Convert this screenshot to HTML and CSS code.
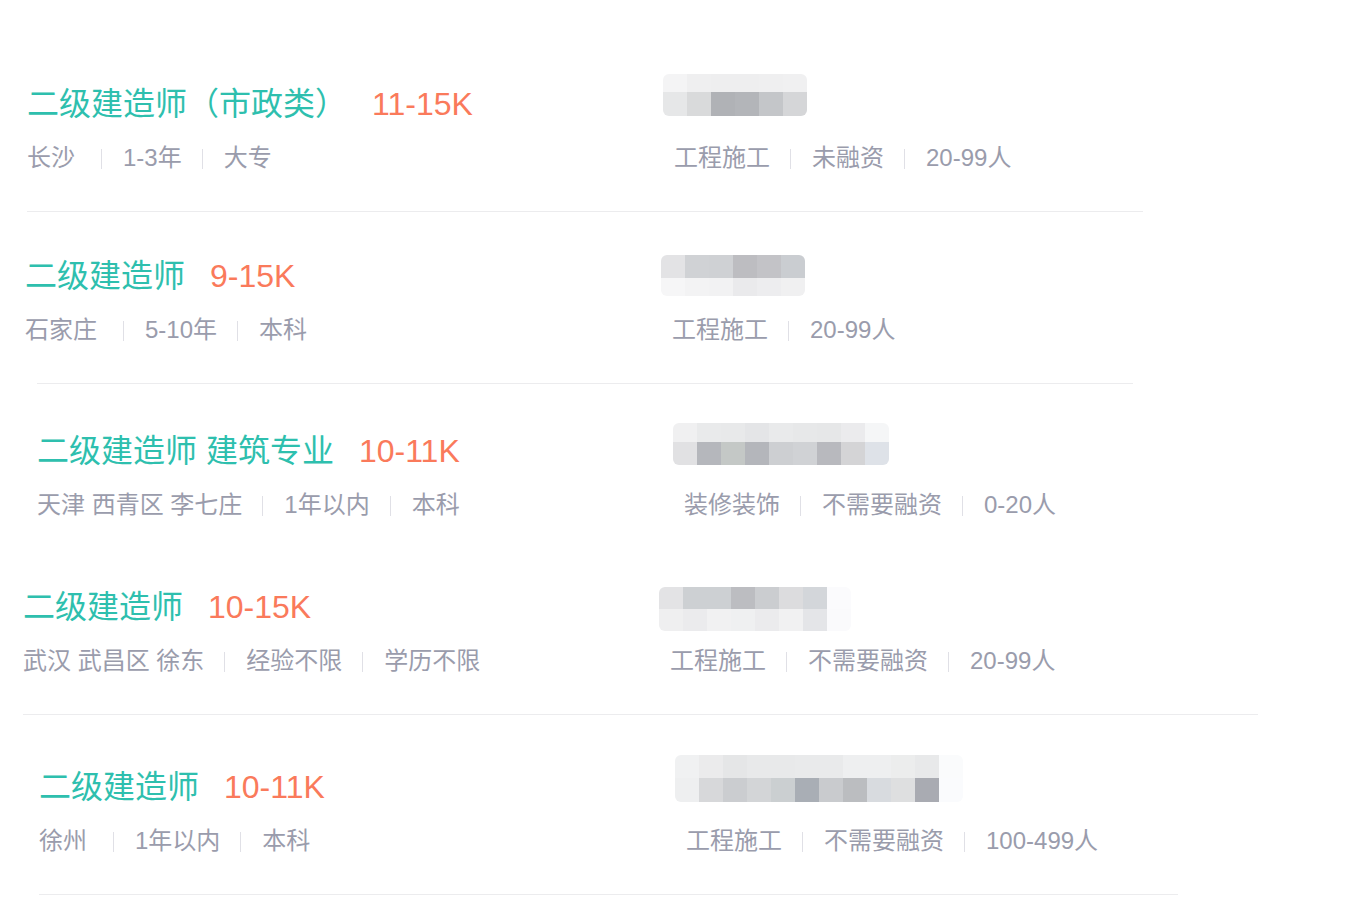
FILE: index.html
```html
<!DOCTYPE html>
<html lang="zh-CN">
<head>
<meta charset="UTF-8">
<meta name="viewport" content="width=device-width, initial-scale=1.0">
<title>职位列表</title>
<link rel="stylesheet" href="styles.css">
</head>
<body>
<div class="job-list">
    <div class="job job-1">
        <div class="job-body">
            <h3 class="title">二级建造师（市政类）<span class="salary">11-15K</span></h3>
            <div class="company">
                <div class="blur blur-1" data-cells="f4f4f5 e6e7e8 efeff0 d9dadb eeeeef b0b2b6 eeeeef b3b5b9 efeff0 c4c6c9 f0f0f1 d5d6d8"></div>
            </div>
            <ul class="meta">
                <li class="city-short">长沙</li>
                <li>1-3年</li>
                <li>大专</li>
            </ul>
            <ul class="meta meta-right">
                <li>工程施工</li>
                <li>未融资</li>
                <li>20-99人</li>
            </ul>
        </div>
    </div>

    <div class="job job-2">
        <div class="job-body">
            <h3 class="title">二级建造师<span class="salary">9-15K</span></h3>
            <div class="company">
                <div class="blur blur-2" data-cells="e3e3e5 f6f6f7 d0d2d5 f3f3f4 cfd1d4 f2f2f3 bdbdc1 eaeaec c3c3c7 ededef cacdd1 f0f0f1"></div>
            </div>
            <ul class="meta">
                <li class="city-short">石家庄</li>
                <li>5-10年</li>
                <li>本科</li>
            </ul>
            <ul class="meta meta-right">
                <li>工程施工</li>
                <li>20-99人</li>
            </ul>
        </div>
    </div>

    <div class="job job-3">
        <div class="job-body">
            <h3 class="title">二级建造师 建筑专业<span class="salary">10-11K</span></h3>
            <div class="company">
                <div class="blur blur-3" data-cells="f0f0f1 e1e1e3 e9eaeb b5b7bc e8e9ea c4c8c6 e4e5e7 b4b6bb e9eaeb cdcfd2 e7e8e9 d0d2d5 e6e7e8 b8b9be ebebed d4d4d6 f5f6f7 dee2e8"></div>
            </div>
            <ul class="meta">
                <li>天津 西青区 李七庄</li>
                <li>1年以内</li>
                <li>本科</li>
            </ul>
            <ul class="meta meta-right">
                <li>装修装饰</li>
                <li>不需要融资</li>
                <li>0-20人</li>
            </ul>
        </div>
    </div>

    <div class="job job-4">
        <div class="job-body">
            <h3 class="title">二级建造师<span class="salary">10-15K</span></h3>
            <div class="company">
                <div class="blur blur-4" data-cells="e3e3e5 efeff0 cdd0d3 ebebed cdd0d3 f1f1f2 bcbdc1 eff0f1 cbcdd0 ebebed dcdcde f1f1f2 d3d6da e4e5e8 fbfbfd fafafc"></div>
            </div>
            <ul class="meta">
                <li>武汉 武昌区 徐东</li>
                <li>经验不限</li>
                <li>学历不限</li>
            </ul>
            <ul class="meta meta-right">
                <li>工程施工</li>
                <li>不需要融资</li>
                <li>20-99人</li>
            </ul>
        </div>
    </div>

    <div class="job job-5">
        <div class="job-body">
            <h3 class="title">二级建造师<span class="salary">10-11K</span></h3>
            <div class="company">
                <div class="blur blur-5" data-cells="f0f1f2 eeeff0 ebebec d7d8da e5e6e7 cbcdd0 e8e9ea d3d5d7 e8e9ea cbcfd1 e9eaeb a9aeb5 e9eaeb c9cbce eeeff0 bbbdc0 eeeff0 d8dbdf eceded dedfe0 e8e9ea a9abb2 fafbfc fafbfd"></div>
            </div>
            <ul class="meta">
                <li class="city-short">徐州</li>
                <li>1年以内</li>
                <li>本科</li>
            </ul>
            <ul class="meta meta-right">
                <li>工程施工</li>
                <li>不需要融资</li>
                <li>100-499人</li>
            </ul>
        </div>
    </div>
</div>

<script>
    // build the pixelated company names from the colour lists
    document.querySelectorAll('.blur').forEach(function (el) {
        el.dataset.cells.split(' ').forEach(function (c) {
            const cell = document.createElement('i');
            cell.style.background = '#' + c;
            el.appendChild(cell);
        });
    });
</script>
</body>
</html>
```

FILE: styles.css
```css
body {
    margin: 0;
    padding: 0;
    background: #fff;
    font-family: "Liberation Sans", "Noto Sans CJK SC", sans-serif;
}
.job-list {
    padding-top: 72px;
}
.job {
    padding-bottom: 37px;
    border-bottom: 1px solid #ececee;
}
.job-body {
    display: grid;
    grid-template-columns: 636px 1fr;
    grid-template-rows: 52px 32px;
    row-gap: 18px;
}
.job-1 {
    margin-left: 27px;
    width: 1116px;
}
.job-2 {
    margin-top: 32px;
    margin-left: 37px;
    width: 1096px;
}
.job-2 .job-body {
    margin-left: -12px;
}
.job-3 {
    margin-top: 35px;
    margin-left: 37px;
    padding-bottom: 0;
    border-bottom: none;
}
.job-4 {
    margin-top: 54px;
    margin-left: 23px;
    width: 1235px;
}
.job-5 {
    margin-top: 40px;
    margin-left: 39px;
    width: 1139px;
}
.title {
    margin: 0;
    align-self: end;
    font-size: 32px;
    line-height: 40px;
    font-weight: normal;
    color: #2ebfae;
    white-space: nowrap;
}
.salary {
    margin-left: 25px;
    font-size: 32px;
    color: #fa7a5b;
}
.company {
    align-self: end;
}
.blur {
    display: grid;
    grid-auto-flow: column;
    grid-auto-columns: 24px;
    width: max-content;
    border-radius: 6px;
    overflow: hidden;
}
.blur i {
    display: block;
}
.blur-1 {
    grid-template-rows: 18px 24px;
    margin-bottom: 8px;
}
.blur-2 {
    grid-template-rows: 23px 18px;
}
.blur-3 {
    grid-template-rows: 19px 23px;
    margin-bottom: 6px;
}
.blur-4 {
    grid-template-rows: 22px 22px;
    margin-bottom: -4px;
}
.blur-5 {
    grid-template-rows: 23px 24px;
    margin-bottom: 5px;
}
.meta {
    display: flex;
    align-items: center;
    margin: 0;
    padding: 0;
    list-style: none;
    font-size: 24px;
    line-height: 32px;
    color: #9a9cac;
    white-space: nowrap;
}
.meta li + li::before {
    content: "";
    display: inline-block;
    width: 1px;
    height: 20px;
    margin: 0 21px 0 20px;
    background: #e0e0e6;
    vertical-align: -3px;
}
.meta .city-short {
    padding-right: 6px;
}
.meta-right {
    padding-left: 11px;
}
```
